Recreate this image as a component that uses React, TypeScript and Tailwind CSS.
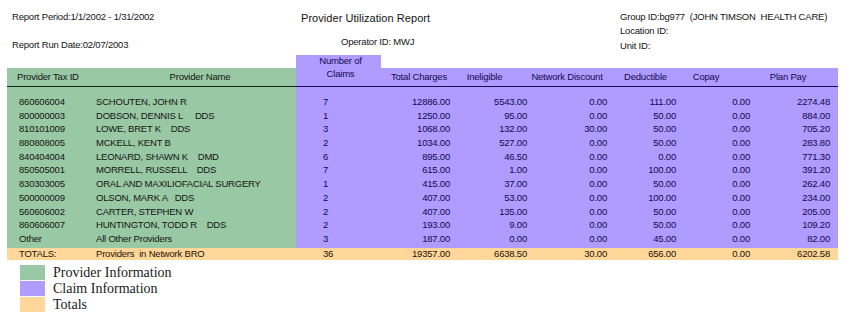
const rows = [
  ["860606004", "SCHOUTEN, JOHN R", "7", "12886.00", "5543.00", "0.00", "111.00", "0.00", "2274.48"],
  ["800000003", "DOBSON, DENNIS L     DDS", "1", "1250.00", "95.00", "0.00", "50.00", "0.00", "884.00"],
  ["810101009", "LOWE, BRET K    DDS", "3", "1068.00", "132.00", "30.00", "50.00", "0.00", "705.20"],
  ["880808005", "MCKELL, KENT B", "2", "1034.00", "527.00", "0.00", "50.00", "0.00", "283.80"],
  ["840404004", "LEONARD, SHAWN K    DMD", "6", "895.00", "46.50", "0.00", "0.00", "0.00", "771.30"],
  ["850505001", "MORRELL, RUSSELL    DDS", "7", "615.00", "1.00", "0.00", "100.00", "0.00", "391.20"],
  ["830303005", "ORAL AND MAXILIOFACIAL SURGERY", "1", "415.00", "37.00", "0.00", "50.00", "0.00", "262.40"],
  ["500000009", "OLSON, MARK A   DDS", "2", "407.00", "53.00", "0.00", "100.00", "0.00", "234.00"],
  ["560606002", "CARTER, STEPHEN W", "2", "407.00", "135.00", "0.00", "50.00", "0.00", "205.00"],
  ["860606007", "HUNTINGTON, TODD R    DDS", "2", "193.00", "9.00", "0.00", "50.00", "0.00", "109.20"],
  ["Other", "All Other Providers", "3", "187.00", "0.00", "0.00", "45.00", "0.00", "82.00"],
];

const totals = ["TOTALS:", "Providers  in Network BRO", "36", "19357.00", "6638.50", "30.00", "656.00", "0.00", "6202.58"];

// right-aligned money columns
const numW = ["w-[69px]", "w-[77px]", "w-[80px]", "w-[69px]", "w-[74px]", "w-[80px]"];

// header cells for the money columns, centred over their labels
const heads = [
  { label: "Total Charges", w: "w-[76px]" },
  { label: "Ineligible", w: "w-[55px]" },
  { label: "Network Discount", w: "w-[110px]" },
  { label: "Deductible", w: "w-[47px]" },
  { label: "Copay", w: "w-[74px]" },
  { label: "Plan Pay", w: "w-[90px]" },
];

function Money({ values }: { values: string[] }) {
  return (
    <>
      {values.map((v, i) => (
        <div key={i} className={`${numW[i]} shrink-0 text-right`}>
          {v}
        </div>
      ))}
    </>
  );
}

export default function App() {
  return (
    <main
      className="h-[319px] w-[862px] overflow-hidden bg-white text-[9.5px] tracking-[-0.2px] text-[#141414]"
      style={{ fontFamily: '"Liberation Sans", Arial, sans-serif' }}
    >
      <header className="flex h-[55px] leading-[14px]">
        <div className="w-[301px] shrink-0 pl-[12px] pt-[10px]">
          <div>Report Period:1/1/2002 - 1/31/2002</div>
          <div className="mt-[14px]">Report Run Date:02/07/2003</div>
        </div>
        <div className="w-[319px] shrink-0 pt-[11px]">
          <div className="text-[11px] tracking-[0.05px]">Provider Utilization Report</div>
          <div className="ml-[40px] mt-[10px]">Operator ID: MWJ</div>
        </div>
        <div className="pt-[10px] leading-[14.4px]">
          <div>Group ID:bg977&nbsp; (JOHN TIMSON&nbsp; HEALTH CARE)</div>
          <div>Location ID:</div>
          <div>Unit ID:</div>
        </div>
      </header>

      <section className="ml-[7px] w-[831px]">
        <div className="flex items-end">
          <div className="flex h-[19px] w-[289px] shrink-0 items-center border-b border-[#1b261e] bg-[#99c8a4]">
            <div className="w-[89px] shrink-0 pl-[10px]">Provider Tax ID</div>
            <div className="w-[200px] shrink-0 pl-[8px] text-center">Provider Name</div>
          </div>
          <div className="flex flex-1 items-end border-b border-[#160f52] text-[#0f0a4d]">
            <div className="h-[31px] w-[85px] shrink-0 bg-[#b09cff] pl-[4px] text-center">
              <div className="h-[12px] leading-[12px]">Number of</div>
              <div className="leading-[14px]">Claims</div>
            </div>
            <div className="flex h-[18px] flex-1 items-center bg-[#b09cff]">
              {heads.map((h) => (
                <div key={h.label} className={`${h.w} shrink-0 text-center`}>
                  {h.label}
                </div>
              ))}
            </div>
          </div>
        </div>

        <div className="flex leading-[13.7px]">
          <div className="w-[289px] shrink-0 bg-[#99c8a4] pb-[2.3px] pt-[8px]">
            {rows.map((r) => (
              <div key={r[0]} className="flex h-[13.7px]">
                <div className="w-[89px] shrink-0 pl-[12px]">{r[0]}</div>
                <div className="whitespace-pre">{r[1]}</div>
              </div>
            ))}
          </div>
          <div className="flex-1 bg-[#b09cff] pb-[2.3px] pt-[8px] text-[#0f0a4d]">
            {rows.map((r) => (
              <div key={r[0]} className="flex h-[13.7px]">
                <div className="w-[85px] shrink-0 pl-[27px]">{r[2]}</div>
                <Money values={r.slice(3)} />
              </div>
            ))}
          </div>
        </div>

        <div className="flex h-[12px] bg-[#ffd79b] leading-[12px] text-[#1e1200]">
          <div className="w-[89px] shrink-0 pl-[12px]">{totals[0]}</div>
          <div className="w-[200px] shrink-0 whitespace-pre">{totals[1]}</div>
          <div className="w-[85px] shrink-0 pl-[27px]">{totals[2]}</div>
          <Money values={totals.slice(3)} />
        </div>
      </section>

      <ul
        className="mt-[5px] flex flex-col gap-[1px] pl-[20px] text-[14px] leading-[15px] tracking-normal text-[#1a1a1a]"
        style={{ fontFamily: '"Liberation Serif", "Times New Roman", serif' }}
      >
        {[
          ["Provider Information", "bg-[#99c8a4]"],
          ["Claim Information", "bg-[#b09cff]"],
          ["Totals", "bg-[#ffd79b]"],
        ].map(([label, bg]) => (
          <li key={label} className="flex items-center gap-[8px]">
            <span className={`h-[15px] w-[25px] shrink-0 ${bg}`} />
            <span>{label}</span>
          </li>
        ))}
      </ul>
    </main>
  );
}
